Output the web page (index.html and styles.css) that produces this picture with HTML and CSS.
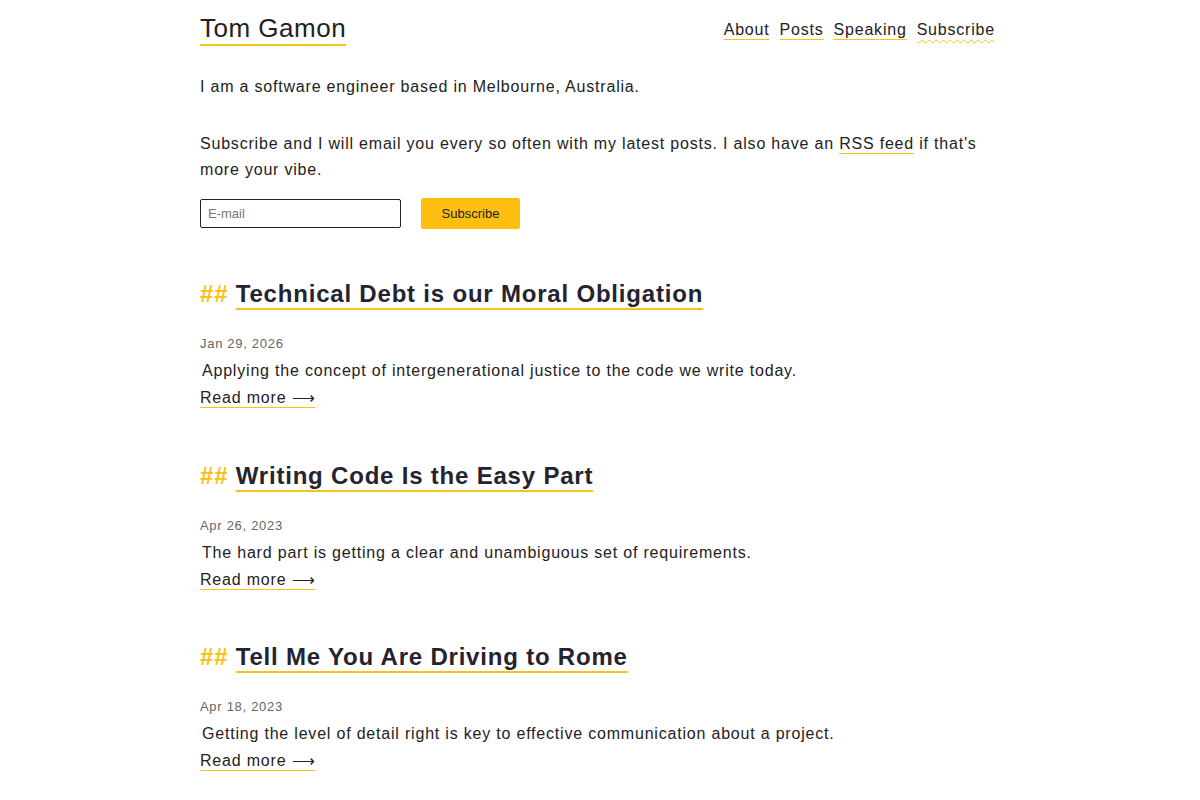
FILE: index.html
```html
<!DOCTYPE html>
<html lang="en">
  <head>
    <meta charset="UTF-8" />
    <meta name="viewport" content="width=device-width, initial-scale=1.0" />
    <title>Tom Gamon</title>
    <link rel="stylesheet" href="styles.css">
  </head>
  <body>
    <div class="page">
      <header class="top">
        <a class="site-name" href="#">Tom Gamon</a>
        <nav class="nav">
          <a href="#">About</a>
          <a href="#">Posts</a>
          <a href="#">Speaking</a>
          <a class="current" href="#">Subscribe</a>
        </nav>
      </header>

      <p class="intro">I am a software engineer based in Melbourne, Australia.</p>

      <p class="intro">
        Subscribe and I will email you every so often with my latest posts. I also have an
        <a href="#">RSS feed</a> if that's more your vibe.
      </p>

      <form class="signup">
        <input class="email" type="email" placeholder="E-mail" />
        <button class="btn" type="button">Subscribe</button>
      </form>

      <div class="posts">
        <article class="post">
          <h2><span class="hash">##</span> <a href="#">Technical Debt is our Moral Obligation</a></h2>
          <div class="date">Jan 29, 2026</div>
          <p class="summary">Applying the concept of intergenerational justice to the code we write today.</p>
          <a class="more" href="#">Read more &#x27F6;</a>
        </article>

        <article class="post">
          <h2><span class="hash">##</span> <a href="#">Writing Code Is the Easy Part</a></h2>
          <div class="date">Apr 26, 2023</div>
          <p class="summary">The hard part is getting a clear and unambiguous set of requirements.</p>
          <a class="more" href="#">Read more &#x27F6;</a>
        </article>

        <article class="post">
          <h2><span class="hash">##</span> <a href="#">Tell Me You Are Driving to Rome</a></h2>
          <div class="date">Apr 18, 2023</div>
          <p class="summary">Getting the level of detail right is key to effective communication about a project.</p>
          <a class="more" href="#">Read more &#x27F6;</a>
        </article>
      </div>
    </div>
  </body>
</html>
```

FILE: styles.css
```css
body {
  margin: 0;
  background-color: #fff;
  color: #222;
  font-family: "Liberation Sans", Arial, sans-serif;
  font-size: 16px;
  letter-spacing: 0.8px;
  line-height: 26px;
}
a {
  color: #222;
  text-decoration: underline;
  text-decoration-color: #f7c31a;
  text-decoration-thickness: 1px;
  text-underline-offset: 4px;
}
.page {
  width: 800px;
  margin: 0 auto;
}
.top {
  display: flex;
  justify-content: space-between;
  align-items: center;
  padding-top: 12px;
}
.site-name {
  font-size: 26px;
  line-height: 32px;
  letter-spacing: 0.5px;
  color: #222;
  text-decoration: none;
  border-bottom: 2px solid #f5c518;
}
.nav {
  display: flex;
  gap: 10px;
  padding-right: 5px;
  padding-top: 2px;
}
.nav .current {
  text-decoration-style: wavy;
}
.intro {
  margin: 0;
}
.intro:first-of-type {
  margin-top: 28px;
  margin-bottom: 31px;
}
.signup {
  display: flex;
  align-items: center;
  gap: 20px;
  margin-top: 15px;
}
.email {
  width: 201px;
  height: 29px;
  box-sizing: border-box;
  border: 1px solid #222;
  border-radius: 2px;
  padding: 0 7px;
  font-family: "Liberation Sans", Arial, sans-serif;
  font-size: 13px;
}
.email::placeholder {
  color: #777;
}
.btn {
  width: 99px;
  height: 31px;
  border: none;
  border-radius: 2px;
  background-color: #fdbf0f;
  color: #222;
  font-family: "Liberation Sans", Arial, sans-serif;
  font-size: 13px;
}
.posts {
  margin-top: 40px;
}
.post {
  margin-bottom: 40.5px;
}
.post h2 {
  margin: 0;
  font-size: 24px;
  line-height: 50px;
  letter-spacing: 0.8px;
  color: #24232f;
}
.post h2 a {
  color: #24232f;
  text-decoration-thickness: 2px;
  text-underline-offset: 6px;
}
.hash {
  color: #fdbf0f;
}
.date {
  margin-top: 13px;
  font-size: 13px;
  letter-spacing: 0.7px;
  color: #666;
  line-height: 24px;
}
.summary {
  margin: 0 0 0 2px;
  line-height: 30px;
}
.more {
  display: block;
  width: fit-content;
  line-height: 24px;
}
```
